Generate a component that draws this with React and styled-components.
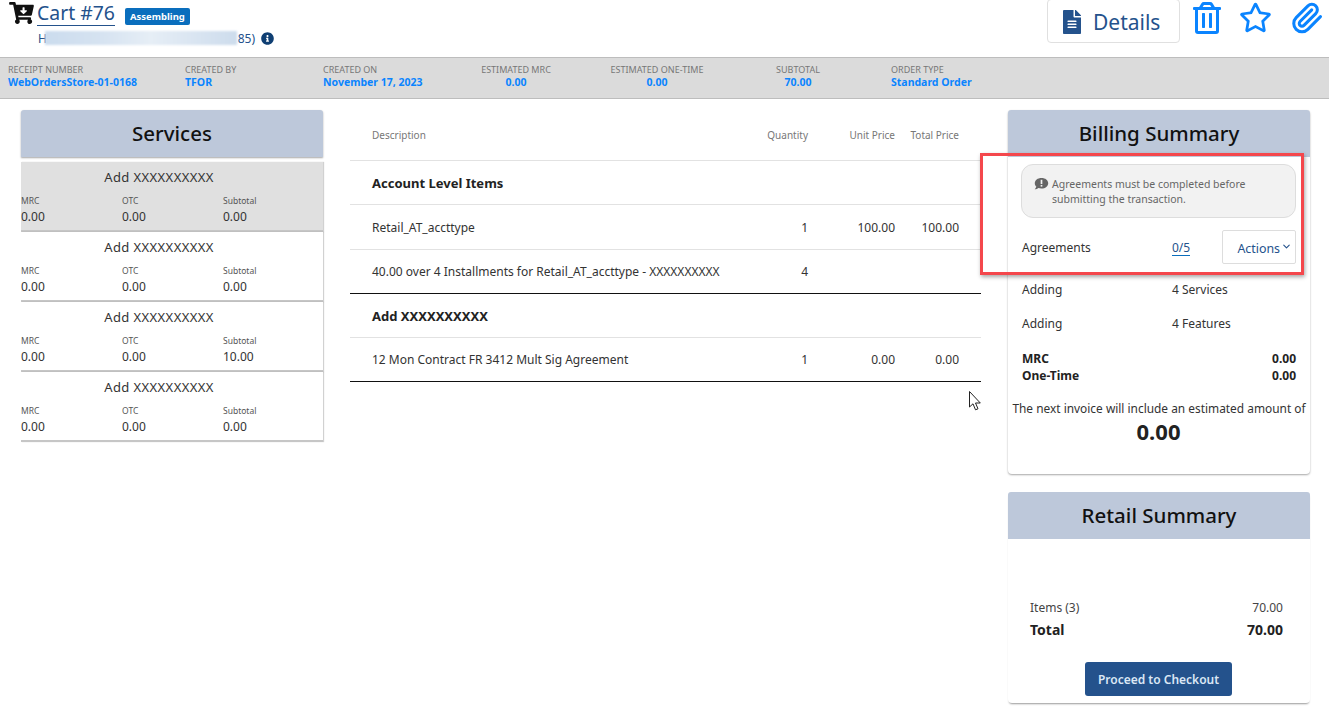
import React from 'react';
import styled, { createGlobalStyle } from 'styled-components';
import { FaCartArrowDown, FaInfoCircle, FaFileAlt, FaRegTrashAlt, FaRegStar } from 'react-icons/fa';
import { LuChevronDown, LuPaperclip } from 'react-icons/lu';

const GlobalStyle = createGlobalStyle`
  html, body {
    margin: 0;
    padding: 0;
    background: #fff;
    font-family: "Noto Sans", "Open Sans", sans-serif;
    color: #222;
  }
  * { box-sizing: border-box; }
`;

const Page = styled.div`
  position: relative;
  width: 1329px;
  height: 717px;
  overflow: hidden;
`;

const Header = styled.header`
  height: 57px;
  display: flex;
  justify-content: space-between;
  padding: 0 7px 0 9px;
`;

const TitleBlock = styled.div`
  display: flex;
  flex-direction: column;
`;

const TitleRow = styled.div`
  display: flex;
  align-items: flex-start;
  height: 26px;
`;

const CartIcon = styled(FaCartArrowDown)`
  width: 25px;
  height: 22px;
  margin-top: 2px;
  margin-right: 3px;
  color: #111;
`;

const CartTitle = styled.h1`
  margin: 0;
  height: 26px;
  font-size: 19.4px;
  line-height: 25px;
  font-weight: 400;
  color: #24528c;
  border-bottom: 1px solid #24528c;
`;

const Badge = styled.span`
  margin: 8px 0 0 10px;
  height: 17px;
  padding: 0 5px;
  display: flex;
  align-items: center;
  border-radius: 2px;
  background: #0a6ebd;
  color: #fff;
  font-size: 9.5px;
  font-weight: 700;
`;

const CustomerRow = styled.div`
  display: flex;
  align-items: center;
  height: 20px;
  margin: 2px 0 0 29px;
  font-size: 12px;
  color: #24528c;
  gap: 6px;
`;

const Customer = styled.span`
  position: relative;
  display: flex;
  justify-content: space-between;
  width: 217px;
  white-space: nowrap;
`;

const BlurMask = styled.span`
  position: absolute;
  left: 7px;
  top: 1px;
  width: 192px;
  height: 14px;
  background: linear-gradient(90deg, #cbdcee 0%, #d6e3f1 30%, #e6eef6 55%, #dbe6f2 75%, #cddcec 100%);
  filter: blur(0.8px);
`;

const InfoIcon = styled(FaInfoCircle)`
  width: 13px;
  height: 13px;
  color: #0f3f73;
`;

const HeaderActions = styled.div`
  display: flex;
  align-items: flex-start;
`;

const DetailsButton = styled.button`
  display: flex;
  align-items: center;
  gap: 12px;
  width: 133px;
  height: 44px;
  margin-top: -1px;
  padding: 1px 0 0 15px;
  background: #fff;
  border: 1px solid #e0e0e0;
  border-radius: 4px;
  color: #24528c;
  font-family: inherit;
  font-size: 21px;
  svg { width: 18px; height: 24px; }
`;

const IconButton = styled.span`
  display: flex;
  color: #0a84ff;
  margin: ${p => p.$margin};
  svg { width: ${p => p.$w}px; height: ${p => p.$h}px; display: block; }
`;

const InfoBar = styled.section`
  height: 42px;
  display: flex;
  padding: 6px 0 0 8px;
  background: #dbdbdb;
  border-top: 1px solid #bdbdbd;
  border-bottom: 1px solid #bdbdbd;
`;

const InfoItem = styled.div`
  flex: 0 0 ${p => p.$width}px;
  text-align: ${p => (p.$center ? 'center' : 'left')};
  padding-right: ${p => p.$pad || 0}px;
`;

const InfoLabel = styled.div`
  font-size: 9px;
  line-height: 12px;
  color: #777;
  text-transform: uppercase;
  white-space: nowrap;
`;

const InfoValue = styled.div`
  font-size: 10.5px;
  line-height: 13px;
  font-weight: 700;
  color: #0a84ff;
  white-space: nowrap;
`;

const Content = styled.main`
  display: grid;
  grid-template-columns: 302px 631px 302px;
  column-gap: 27px;
  padding: 11px 0 0 21px;
  align-items: start;
`;

const PanelHeader = styled.h2`
  margin: 0;
  height: 47px;
  padding-bottom: 1px;
  display: flex;
  align-items: center;
  justify-content: center;
  background: #bdc8da;
  border-radius: 3px 3px 0 0;
  color: #111;
  font-size: 20.5px;
  font-weight: 500;
  box-shadow: ${p => (p.$shadow ? '0 1px 2px rgba(0,0,0,.35)' : 'none')};
`;

const ServiceList = styled.div`
  display: flex;
  flex-direction: column;
  margin-top: 5px;
`;

const ServiceCard = styled.div`
  height: 70px;
  padding-top: 6px;
  background: ${p => (p.$active ? '#e0e0e0' : '#fff')};
  border-bottom: 2px solid #c6c6c6;
  box-shadow: 1px 0 1px rgba(0,0,0,.18);
`;

const ServiceName = styled.div`
  padding-right: 26px;
  text-align: center;
  font-size: 13px;
  line-height: 18px;
  letter-spacing: 0.4px;
  color: #333;
`;

const ServiceGrid = styled.div`
  display: grid;
  grid-template-columns: repeat(3, 101px);
  margin-top: 9px;
`;

const MiniLabel = styled.div`
  font-size: 8.5px;
  line-height: 12px;
  color: #555;
`;

const MiniValue = styled.div`
  font-size: 12px;
  line-height: 16px;
  margin-top: 2px;
  color: #333;
`;

const OrderTable = styled.div`
  display: flex;
  flex-direction: column;
`;

const Row = styled.div`
  display: grid;
  grid-template-columns: 1fr 60px 87px 64px;
  align-items: center;
  height: ${p => p.$height || 44}px;
  padding: 0 22px;
  border-bottom: 1px solid ${p => (p.$strong ? '#111' : '#e2e2e2')};
  font-size: 12px;
  color: #333;
`;

const HeadRow = styled(Row)`
  font-size: 10px;
  color: #777;
`;

const Num = styled.span`
  text-align: right;
  white-space: nowrap;
`;

const GroupTitle = styled.div`
  display: flex;
  align-items: center;
  height: 44px;
  padding: 0 22px;
  border-bottom: 1px solid #e2e2e2;
  font-size: 13px;
  font-weight: 700;
  color: #222;
`;

const SideColumn = styled.div`
  display: flex;
  flex-direction: column;
  gap: 18px;
`;

const SummaryCard = styled.section`
  background: #fff;
  border-radius: 4px;
  box-shadow: ${p => (p.$bottomOnly ? '0 2px 2px -1px rgba(0,0,0,.4)' : '0 1px 2px rgba(0,0,0,.35)')};
`;

const BillingBody = styled.div`
  height: 317px;
  padding: 7px 14px 0 13px;
  font-size: 12px;
  color: #333;
`;

const Notice = styled.div`
  display: flex;
  gap: 3px;
  height: 54px;
  padding: 12px 10px 0 12px;
  background: #f2f2f2;
  border: 1px solid #ddd;
  border-radius: 12px;
  font-size: 10.5px;
  line-height: 15px;
  color: #666;
  svg { flex: none; width: 15px; height: 14px; }
`;

const AgreementRow = styled.div`
  display: grid;
  grid-template-columns: 150px 50px 74px;
  align-items: center;
  margin-top: 12px;
  height: 34px;
  padding-left: 1px;
`;

const AgreementCount = styled.a`
  justify-self: start;
  margin-top: 1px;
  color: #24528c;
  border-bottom: 1px solid #0a6ebd;
  line-height: 15px;
`;

const ActionsButton = styled.button`
  display: flex;
  align-items: center;
  justify-content: flex-end;
  height: 34px;
  padding: 2px 3px 0 0;
  gap: 1px;
  background: #fff;
  border: 1px solid #ddd;
  border-radius: 2px;
  font-family: inherit;
  font-size: 12.4px;
  color: #24528c;
  svg { width: 11px; height: 11px; margin-bottom: 3px; stroke-width: 2.4; }
`;

const FactRow = styled.div`
  display: grid;
  grid-template-columns: 150px 1fr;
  padding-left: 1px;
  line-height: 16px;
  margin-top: ${p => p.$top}px;
`;

const TotalRow = styled.div`
  display: flex;
  justify-content: space-between;
  padding-left: 1px;
  font-weight: 700;
  line-height: 17px;
  color: #222;
  margin-top: ${p => p.$top || 0}px;
`;

const InvoiceNote = styled.div`
  margin: 16px -10px 0 -9px;
  text-align: center;
  white-space: nowrap;
  line-height: 16px;
  font-size: 11.9px;
`;

const InvoiceAmount = styled.div`
  text-align: center;
  font-size: 22px;
  line-height: 30px;
  font-weight: 700;
  color: #222;
`;

const RetailBody = styled.div`
  height: 164px;
  padding: 60px 27px 0 22px;
  display: flex;
  flex-direction: column;
`;

const RetailLine = styled.div`
  display: flex;
  justify-content: space-between;
  font-size: ${p => (p.$total ? '14px' : '12px')};
  font-weight: ${p => (p.$total ? 700 : 400)};
  line-height: 18px;
  margin-top: ${p => p.$top || 0}px;
  color: ${p => (p.$total ? '#222' : '#444')};
`;

const CheckoutButton = styled.button`
  align-self: center;
  width: 147px;
  height: 34px;
  margin: 23px 0 0 4px;
  background: #24528c;
  border: 0;
  border-radius: 3px;
  color: #dbe7f5;
  font-family: inherit;
  font-size: 12px;
  font-weight: 600;
`;

const Annotation = styled.div`
  position: absolute;
  left: 980px;
  top: 153px;
  width: 324px;
  height: 122px;
  border: 3px solid #f4474c;
  box-shadow: 1px 2px 4px rgba(0,0,0,.35);
  pointer-events: none;
`;

const Pointer = styled.svg`
  position: absolute;
  left: 968px;
  top: 390px;
  width: 14px;
  height: 22px;
`;

const infoItems = [
  { label: 'Receipt Number', value: 'WebOrdersStore-01-0168', width: 177 },
  { label: 'Created By', value: 'TFOR', width: 138 },
  { label: 'Created On', value: 'November 17, 2023', width: 157 },
  { label: 'Estimated MRC', value: '0.00', width: 129, center: true, pad: 57 },
  { label: 'Estimated One-Time', value: '0.00', width: 167, center: true, pad: 71 },
  { label: 'Subtotal', value: '70.00', width: 115, center: true, pad: 71 },
  { label: 'Order Type', value: 'Standard Order', width: 150 },
];

const services = [
  { subtotal: '0.00', active: true },
  { subtotal: '0.00' },
  { subtotal: '10.00' },
  { subtotal: '0.00' },
];

const CommentAlert = () => (
  <svg viewBox="0 0 16 15">
    <path fill="#666" d="M8 1C3.9 1 .8 3.4.8 6.6c0 1.4.6 2.6 1.6 3.6-.2 1.2-1 2.3-1.7 3 1.6 0 3-.6 4-1.4.9.3 2 .5 3.3.5 4.1 0 7.2-2.5 7.2-5.7S12.100 1 8 1z" />
    <rect x="7.100" y="3" width="1.800" height="4.500" fill="#f2f2f2" />
    <rect x="7.100" y="8.500" width="1.800" height="1.800" fill="#f2f2f2" />
  </svg>
);

export default function App() {
  return (
    <Page>
      <GlobalStyle />
      <Header>
        <TitleBlock>
          <TitleRow>
            <CartIcon />
            <CartTitle>Cart #76</CartTitle>
            <Badge>Assembling</Badge>
          </TitleRow>
          <CustomerRow>
            <Customer>
              <span>H</span>
              <span>85)</span>
              <BlurMask />
            </Customer>
            <InfoIcon />
          </CustomerRow>
        </TitleBlock>
        <HeaderActions>
          <DetailsButton><FaFileAlt />Details</DetailsButton>
          <IconButton $margin="2px 0 0 13px" $w={28} $h={32}><FaRegTrashAlt /></IconButton>
          <IconButton $margin="2px 0 0 18px" $w={33} $h={31}><FaRegStar /></IconButton>
          <IconButton $margin="1px -2px 0 19px" $w={33} $h={34}><LuPaperclip strokeWidth={2.2} /></IconButton>
        </HeaderActions>
      </Header>

      <InfoBar>
        {infoItems.map(item => (
          <InfoItem key={item.label} $width={item.width} $center={item.center} $pad={item.pad}>
            <InfoLabel>{item.label}</InfoLabel>
            <InfoValue>{item.value}</InfoValue>
          </InfoItem>
        ))}
      </InfoBar>

      <Content>
        <div>
          <PanelHeader $shadow>Services</PanelHeader>
          <ServiceList>
            {services.map((service, i) => (
              <ServiceCard key={i} $active={service.active}>
                <ServiceName>Add XXXXXXXXXX</ServiceName>
                <ServiceGrid>
                  <div><MiniLabel>MRC</MiniLabel><MiniValue>0.00</MiniValue></div>
                  <div><MiniLabel>OTC</MiniLabel><MiniValue>0.00</MiniValue></div>
                  <div><MiniLabel>Subtotal</MiniLabel><MiniValue>{service.subtotal}</MiniValue></div>
                </ServiceGrid>
              </ServiceCard>
            ))}
          </ServiceList>
        </div>

        <OrderTable>
          <HeadRow $height={51}>
            <span>Description</span>
            <Num>Quantity</Num>
            <Num>Unit Price</Num>
            <Num>Total Price</Num>
          </HeadRow>
          <GroupTitle>Account Level Items</GroupTitle>
          <Row $height={45}>
            <span>Retail_AT_accttype</span>
            <Num>1</Num>
            <Num>100.00</Num>
            <Num>100.00</Num>
          </Row>
          <Row $strong>
            <span>40.00 over 4 Installments for Retail_AT_accttype - XXXXXXXXXX</span>
            <Num>4</Num>
            <Num />
            <Num />
          </Row>
          <GroupTitle>Add XXXXXXXXXX</GroupTitle>
          <Row $strong>
            <span>12 Mon Contract FR 3412 Mult Sig Agreement</span>
            <Num>1</Num>
            <Num>0.00</Num>
            <Num>0.00</Num>
          </Row>
        </OrderTable>

        <SideColumn>
          <SummaryCard>
            <PanelHeader>Billing Summary</PanelHeader>
            <BillingBody>
              <Notice>
                <CommentAlert />
                <span>Agreements must be completed before submitting the transaction.</span>
              </Notice>
              <AgreementRow>
                <span>Agreements</span>
                <AgreementCount>0/5</AgreementCount>
                <ActionsButton>Actions<LuChevronDown /></ActionsButton>
              </AgreementRow>
              <FactRow $top={18}><span>Adding</span><span>4 Services</span></FactRow>
              <FactRow $top={18}><span>Adding</span><span>4 Features</span></FactRow>
              <TotalRow $top={18}><span>MRC</span><span>0.00</span></TotalRow>
              <TotalRow><span>One-Time</span><span>0.00</span></TotalRow>
              <InvoiceNote>The next invoice will include an estimated amount of</InvoiceNote>
              <InvoiceAmount>0.00</InvoiceAmount>
            </BillingBody>
          </SummaryCard>
          <SummaryCard $bottomOnly>
            <PanelHeader>Retail Summary</PanelHeader>
            <RetailBody>
              <RetailLine><span>Items (3)</span><span>70.00</span></RetailLine>
              <RetailLine $total $top={4}><span>Total</span><span>70.00</span></RetailLine>
              <CheckoutButton>Proceed to Checkout</CheckoutButton>
            </RetailBody>
          </SummaryCard>
        </SideColumn>
      </Content>

      <Annotation />
      <Pointer viewBox="0 0 14 22">
        <path d="M1.500 1.500v15.500l3.500-3.200 2.500 6 2.500-1-2.500-5.800h4.800z" fill="#fff" stroke="#222" strokeWidth="1" />
      </Pointer>
    </Page>
  );
}
